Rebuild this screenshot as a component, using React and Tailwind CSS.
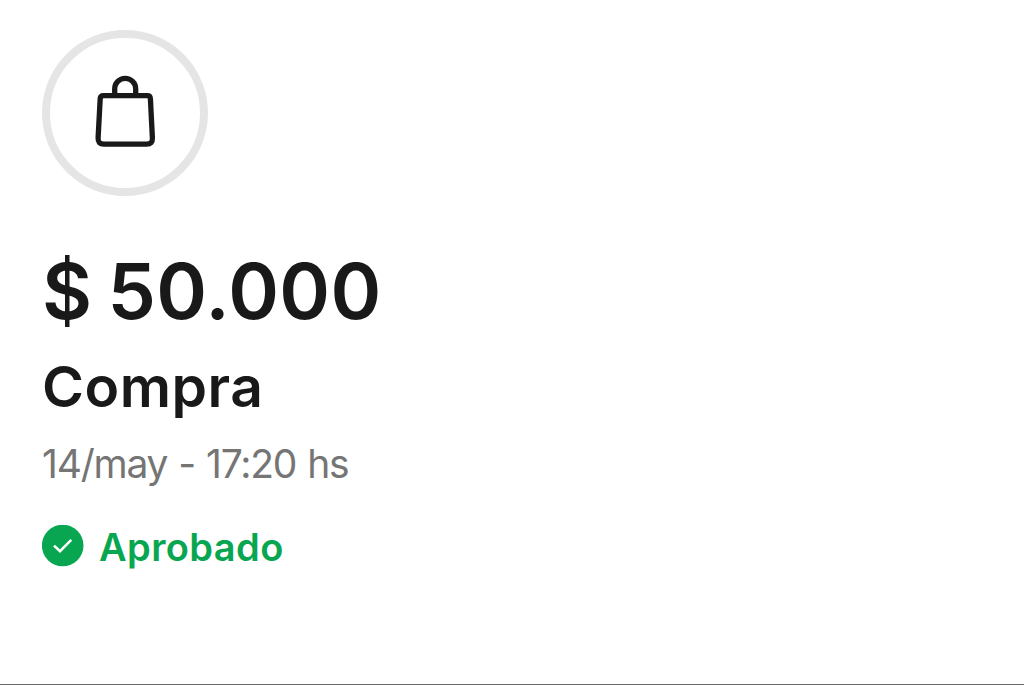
function BagIcon() {
  return (
    <svg className="h-[90px] w-[90px] shrink-0" viewBox="80 68 90 90" fill="none" stroke="#191919" strokeWidth="5.3">
      <path d="M103.4 95.6H147.2Q150.2 95.6 150.4 98.6L152.4 138Q152.7 144.2 146.6 144.2H103.8Q97.8 144.2 98.1 138L100.2 98.6Q100.4 95.6 103.4 95.6Z" />
      <path d="M114.7 95V88.8A10.5 10.5 0 0 1 135.7 88.8V95" />
    </svg>
  );
}

function CheckBadge() {
  return (
    <svg className="mt-[2px] h-[42px] w-[42px] shrink-0" viewBox="0 0 42 42" fill="none">
      <circle cx="20.7" cy="20.5" r="20.8" fill="#08a650" />
      <path d="M12.9 21.4L18 26.2L28.4 15.7" stroke="#fff" strokeWidth="2.5" strokeLinecap="square" strokeLinejoin="miter" />
    </svg>
  );
}

export default function App() {
  return (
    <main className="flex h-[685px] w-full flex-col items-start overflow-hidden border-b border-[#686868] bg-white pl-[42px] pt-[30px] font-['Inter',sans-serif] text-[#191919]">
      <div className="flex h-[166px] w-[166px] items-center justify-center overflow-hidden rounded-full border-8 border-[#e5e5e5]">
        <BagIcon />
      </div>
      <h1 className="mt-[55px] whitespace-nowrap text-[77px] font-semibold leading-[80px] tracking-[0.4px] [word-spacing:-4.8px]">$ 50.000</h1>
      <h2 className="mt-[24px] whitespace-nowrap text-[57px] font-semibold leading-[64px] tracking-[0.5px]">Compra</h2>
      <p className="mt-[21px] whitespace-nowrap text-[39px] leading-[48px] tracking-[-1.2px] text-[#757575] [word-spacing:1.2px]">14/may - 17:20 hs</p>
      <div className="mt-[35px] flex items-start">
        <CheckBadge />
        <span className="ml-[15px] whitespace-nowrap text-[38px] font-semibold leading-[48px] tracking-[0.4px] text-[#08a650]">Aprobado</span>
      </div>
    </main>
  );
}
